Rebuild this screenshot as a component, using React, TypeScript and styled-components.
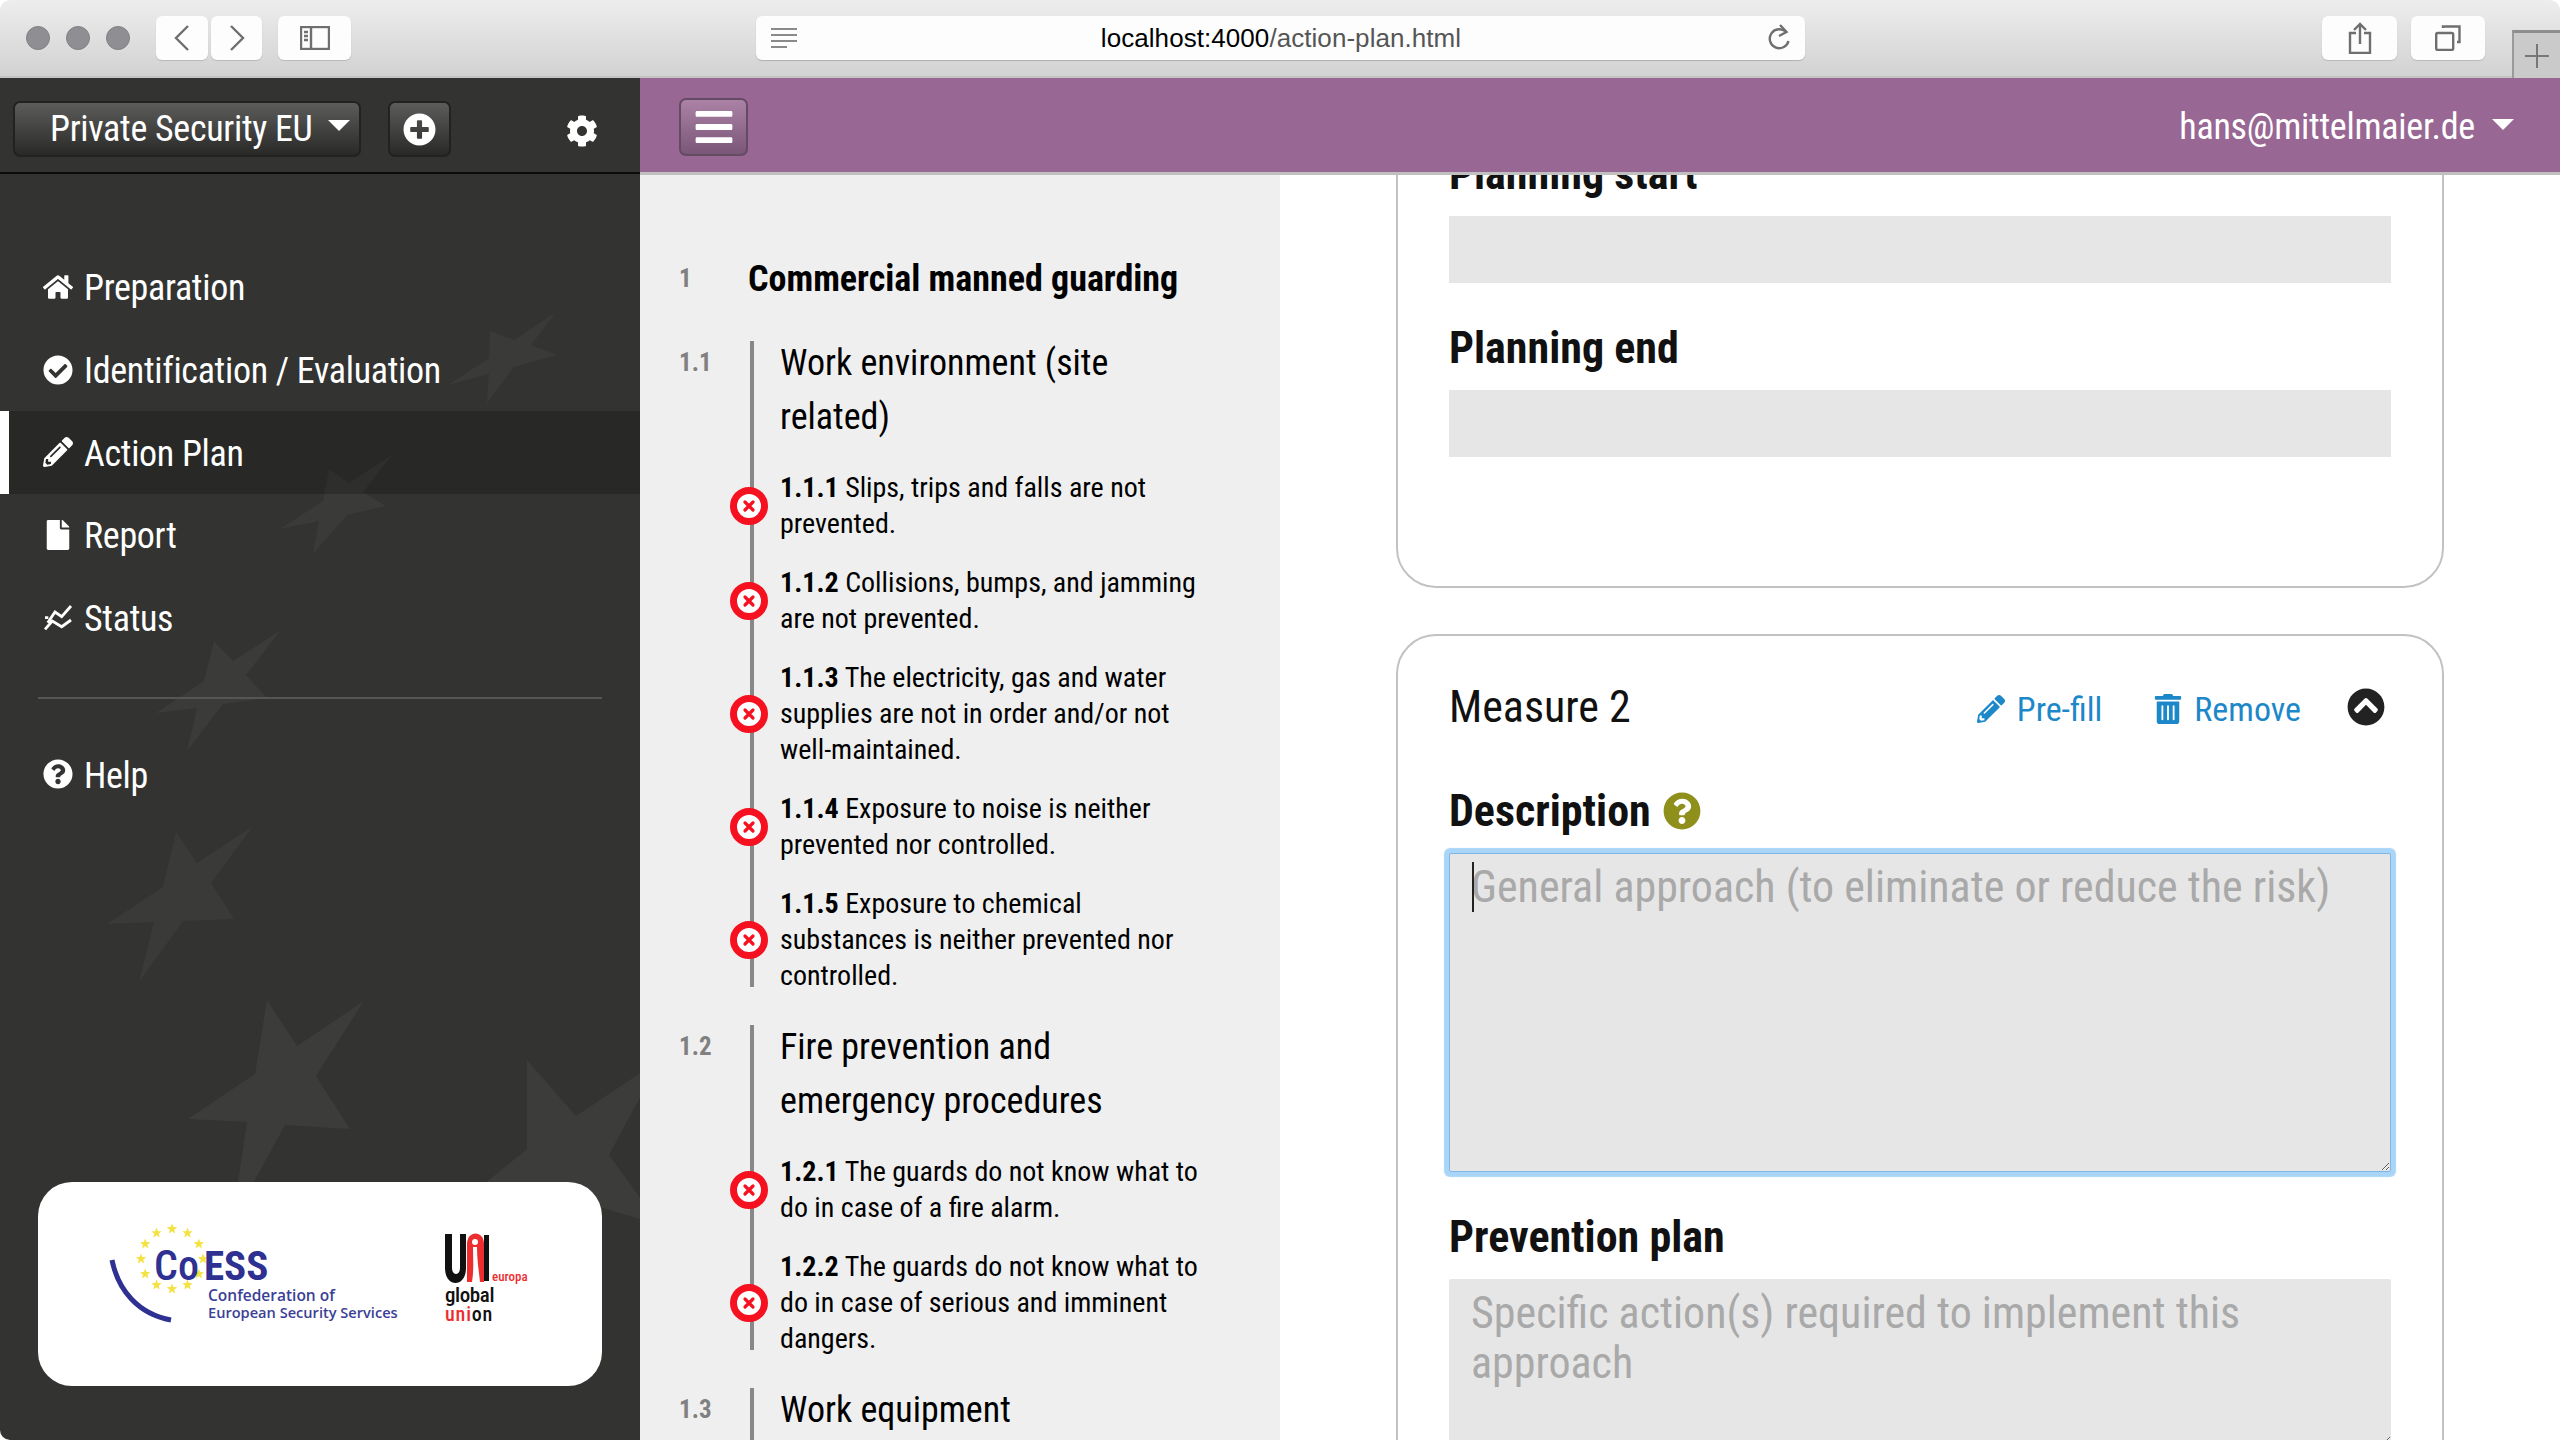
import React from "react";
import styled, { createGlobalStyle } from "styled-components";
import {
  FaHome,
  FaCheckCircle,
  FaPencilAlt,
  FaFile,
  FaQuestionCircle,
  FaCog,
  FaPlusCircle,
  FaTrashAlt,
  FaChevronCircleUp,
  FaBars,
} from "react-icons/fa";

const cond = `"Roboto Condensed", Roboto, sans-serif`;

const Global = createGlobalStyle`
  * { box-sizing: border-box; }
  html, body { margin: 0; padding: 0; background: #fff; overflow: hidden; }
  body { font-family: ${cond}; color: #111; }
`;

const Window = styled.div`
  width: 2560px;
  height: 1440px;
  display: flex;
  flex-direction: column;
  overflow: hidden;
  border-radius: 10px;
  background: #fff;
`;

const TitleBar = styled.header`
  height: 78px;
  flex: none;
  display: flex;
  align-items: center;
  padding-left: 26px;
  background: linear-gradient(#ededed, #d3d2d3);
  border-bottom: 2px solid #c4c3c4;
`;

const Light = styled.span`
  width: 24px;
  height: 24px;
  margin-right: 16px;
  border-radius: 50%;
  background: #8f8f93;
  border: 1px solid #808083;
`;

const ChromeButton = styled.div<{ $w: number; $ml: number }>`
  width: ${(p) => p.$w}px;
  margin-left: ${(p) => p.$ml}px;
  height: 44px;
  display: flex;
  align-items: center;
  justify-content: center;
  background: #fdfdfd;
  border-radius: 6px;
  box-shadow: 0 1px 1px #b9b9b9;
`;

const UrlBar = styled.div`
  width: 1049px;
  margin-left: 405px;
  height: 44px;
  display: flex;
  align-items: center;
  justify-content: space-between;
  padding: 0 14px 0 15px;
  background: #fdfdfd;
  border-radius: 6px;
  box-shadow: 0 1px 1px #b0b0b0;
`;

const UrlText = styled.div`
  font-family: "Liberation Sans", Arial, sans-serif;
  font-size: 26px;
  letter-spacing: 0.06px;
  color: #000;
  margin-left: -2px;
  span { color: #555; }
`;

const NewTab = styled.div`
  width: 48px;
  height: 48px;
  margin-left: 27px;
  align-self: flex-end;
  margin-bottom: -2px;
  display: flex;
  align-items: center;
  justify-content: center;
  background: #cbcacb;
  border-top: 3px solid #8e8e8e;
  border-left: 2px solid #9a9a9a;
`;

const Body = styled.div`
  flex: 1;
  display: flex;
  min-height: 0;
`;

const Sidebar = styled.aside`
  position: relative;
  width: 640px;
  flex: none;
  display: flex;
  flex-direction: column;
  background: #333331;
  overflow: hidden;
`;

const Stars = styled.svg`
  position: absolute;
  left: 0;
  top: 0;
  width: 640px;
  height: 1362px;
`;

const SideHead = styled.div`
  position: relative;
  height: 96px;
  flex: none;
  display: flex;
  align-items: flex-start;
  padding: 23px 0 0 13px;
  border-bottom: 2px solid #0b0b0b;
  color: #fff;
`;

const DarkButton = styled.div<{ $w: number; $ml?: number }>`
  width: ${(p) => p.$w}px;
  margin-left: ${(p) => p.$ml ?? 0}px;
  height: 56px;
  display: flex;
  align-items: center;
  color: #fff;
  background: linear-gradient(#5c5c5a, #292928);
  border: 2px solid #222;
  border-radius: 7px;
`;

const SiteName = styled.span`
  margin-left: 35px;
  font-size: 36px;
  letter-spacing: -0.3px;
  line-height: 1;
`;

const Caret = styled.span<{ $size: number }>`
  width: 0;
  height: 0;
  border-left: ${(p) => p.$size}px solid transparent;
  border-right: ${(p) => p.$size}px solid transparent;
  border-top: ${(p) => p.$size}px solid #fff;
`;

const SiteCaret = styled(Caret)`
  margin-left: 16px;
  margin-top: -8px;
`;

const CenterIcon = styled.span`
  flex: 1;
  display: flex;
  justify-content: center;
  font-size: 33px;
`;

const Gear = styled.span`
  margin-left: 115px;
  margin-top: 14px;
  font-size: 32px;
  line-height: 1;
`;

const Nav = styled.nav<{ $pt: number }>`
  position: relative;
  padding-top: ${(p) => p.$pt}px;
`;

const NavItem = styled.div<{ $active?: boolean }>`
  height: 82.7px;
  display: flex;
  align-items: center;
  padding-top: 2px;
  padding-left: ${(p) => (p.$active ? 34 : 43)}px;
  border-left: ${(p) => (p.$active ? "9px solid #fff" : "0")};
  background: ${(p) => (p.$active ? "rgba(0,0,0,.2)" : "transparent")};
  color: #fff;
  font-size: 36px;
  letter-spacing: -0.3px;
  svg {
    width: 30px;
    height: 30px;
    flex: none;
    margin-right: 11px;
    margin-top: -3px;
  }
`;

const Divider = styled.div`
  position: relative;
  height: 2px;
  margin: 38px 38px 0;
  background: #565654;
`;

const LogoCard = styled.div`
  position: relative;
  margin: auto 38px 54px;
  height: 204px;
  background: #fff;
  border-radius: 34px;
  svg { display: block; }
`;

const Main = styled.main`
  flex: 1;
  min-width: 0;
  display: flex;
  flex-direction: column;
`;

const TopBar = styled.div`
  height: 97px;
  flex: none;
  display: flex;
  align-items: flex-start;
  background: #986794;
  border-bottom: 3px solid #c0c0c0;
  color: #fff;
  position: relative;
  z-index: 1;
`;

const MenuButton = styled.div`
  width: 69px;
  height: 58px;
  margin: 20px 0 0 39px;
  display: flex;
  align-items: center;
  justify-content: center;
  color: #fff;
  font-size: 42px;
  background: linear-gradient(#ab82a6, #7a5678);
  border: 2px solid #654a64;
  border-radius: 7px;
`;

const User = styled.div`
  margin: 27px 0 0 auto;
  font-size: 36px;
  letter-spacing: -0.25px;
  line-height: 44px;
`;

const UserCaret = styled(Caret)`
  margin: 41px 46px 0 17px;
`;

const Columns = styled.div`
  flex: 1;
  min-height: 0;
  display: flex;
`;

const Outline = styled.section`
  width: 640px;
  flex: none;
  background: #efefef;
  padding: 77px 0 0 39px;
  overflow: hidden;
`;

const Chapter = styled.div`
  display: flex;
  align-items: center;
  height: 54px;
  margin-bottom: 35px;
`;

const Num = styled.div`
  font-size: 25px;
  font-weight: 700;
  color: #808080;
  line-height: 54px;
`;

const ChapterNum = styled(Num)`
  width: 69px;
`;

const ChapterTitle = styled.h1`
  margin: 0;
  font-size: 36px;
  font-weight: 700;
  color: #000;
  white-space: nowrap;
`;

const Group = styled.div`
  display: flex;
  margin-bottom: 38px;
`;

const GroupNum = styled(Num)`
  width: 71px;
  flex: none;
  margin-top: -5px;
`;

const GroupBody = styled.div`
  width: 451px;
  flex: none;
  padding-left: 26px;
  border-left: 4px solid #888;
`;

const GroupTitle = styled.h2`
  margin: -5px 0 26px;
  font-size: 36px;
  font-weight: 400;
  line-height: 54px;
  color: #000;
`;

const Item = styled.div`
  position: relative;
  margin-bottom: 23px;
  font-size: 28px;
  line-height: 36px;
  color: #000;
  &:last-child { margin-bottom: -7px; }
  b { font-weight: 700; }
`;

const Mark = styled.svg`
  position: absolute;
  left: -50px;
  top: 50%;
  width: 38px;
  height: 38px;
  margin-top: -19px;
`;

const FormColumn = styled.section`
  flex: 1;
  min-width: 0;
  overflow: hidden;
  padding-left: 116px;
`;

const Card = styled.div<{ $first?: boolean }>`
  width: 1048px;
  margin-top: ${(p) => (p.$first ? "-80px" : "46px")};
  padding: ${(p) => (p.$first ? "50px 51px 129px" : "44px 51px 0")};
  border: 2px solid #c2c2c2;
  border-radius: 40px;
  background: #fff;
`;

const FieldLabel = styled.label`
  display: flex;
  align-items: center;
  height: 54px;
  margin: 0 0 15px;
  font-size: 44px;
  font-weight: 700;
  color: #111;
`;

const PlainInput = styled.div`
  height: 67px;
  margin-bottom: 38px;
  background: #e6e6e6;
  &:last-child { margin-bottom: 0; }
`;

const HelpDot = styled(FaQuestionCircle)`
  margin-left: 12px;
  width: 38px;
  height: 38px;
  color: #8f8f1b;
`;

const MeasureHead = styled.div`
  display: flex;
  align-items: center;
  height: 54px;
  margin-bottom: 50px;
`;

const MeasureTitle = styled.h3`
  margin: 0 auto 0 0;
  font-size: 44px;
  font-weight: 400;
  color: #111;
`;

const Action = styled.a`
  display: flex;
  align-items: center;
  margin: 4px 52px 0 0;
  font-size: 34px;
  color: #1c87c9;
  svg {
    width: 28px;
    height: 30px;
    margin-right: 12px;
  }
`;

const Collapse = styled(FaChevronCircleUp)`
  width: 38px;
  height: 38px;
  margin-right: 6px;
  margin-left: -6px;
  color: #222;
`;

const AreaWrap = styled.div`
  position: relative;
  margin-bottom: 38px;
`;

const Area = styled.textarea<{ $h: number; $focus?: boolean }>`
  display: block;
  width: 942px;
  height: ${(p) => p.$h}px;
  padding: ${(p) => (p.$focus ? "8px 21px" : "9px 22px")};
  border: ${(p) => (p.$focus ? "1px solid #7fb6e6" : "0")};
  border-radius: 2px;
  outline: 0;
  resize: vertical;
  background: #e6e6e6;
  font-family: ${cond};
  font-size: 44px;
  line-height: 50px;
  box-shadow: ${(p) => (p.$focus ? "0 0 1px 5px #a9d5f8" : "none")};
  &::placeholder { color: #a9a9a9; opacity: 1; }
`;

const TextCaret = styled.span`
  position: absolute;
  left: 23px;
  top: 9px;
  width: 2px;
  height: 50px;
  background: #222;
`;

const iconStroke = { fill: "none", stroke: "#6f6f6f", strokeWidth: 2.4 };

const starPoints = [
  ["556,312 531,345 557,355 514,367 487,403 489,374 448,385 489,358 490,331 514,340", "#3a3a39"],
  ["392,455 363,492 386,506 347,515 313,554 319,521 280,529 323,501 329,469 349,483", "#3a3a39"],
  ["281,630 246,675 267,698 223,704 187,751 197,708 156,713 204,681 214,641 233,661", "#3b3b3a"],
  ["253,826 211,883 234,919 183,921 139,982 154,922 107,924 163,887 176,832 197,863", "#3a3a39"],
  ["364,1001 316,1076 350,1129 285,1125 232,1222 247,1122 188,1119 255,1074 267,1000 297,1046", "#3c3c3b"],
  ["660,1060 609,1155 660,1225 576,1200 527,1300 527,1230 440,1220 527,1149 527,1060 576,1116", "#3c3c3b"],
];

const ringStars = Array.from({ length: 12 }, (_, i) => {
  const a = (i * Math.PI) / 6;
  return { x: 172 + Math.sin(a) * 31, y: 1259 - Math.cos(a) * 30 };
});

const starPath = (x: number, y: number, r: number) => {
  const pts: string[] = [];
  for (let i = 0; i < 10; i++) {
    const a = (i * Math.PI) / 5;
    const rr = i % 2 ? r * 0.42 : r;
    pts.push(`${(x + Math.sin(a) * rr).toFixed(1)},${(y - Math.cos(a) * rr).toFixed(1)}`);
  }
  return pts.join(" ");
};

const XMark = () => (
  <Mark viewBox="0 0 38 38">
    <circle cx="19" cy="19" r="15.5" fill="#fff" stroke="#f5111f" strokeWidth="7" />
    <path d="M15 15l8 8M23 15l-8 8" stroke="#f5111f" strokeWidth="3.2" strokeLinecap="round" />
  </Mark>
);

const StatusIcon = () => (
  <svg viewBox="0 0 30 30">
    <path
      d="M4.7 19.7 L12 9 L18.7 13.7 L28 3 M2 14.7 H5.3 M2 26.3 L9.3 18 L18.7 23.7 L28 17"
      fill="none"
      stroke="#fff"
      strokeWidth="2.8"
    />
  </svg>
);

const groups = [
  {
    num: "1.1",
    title: "Work environment (site related)",
    items: [
      ["1.1.1", "Slips, trips and falls are not prevented."],
      ["1.1.2", "Collisions, bumps, and jamming are not prevented."],
      ["1.1.3", "The electricity, gas and water supplies are not in order and/or not well-maintained."],
      ["1.1.4", "Exposure to noise is neither prevented nor controlled."],
      ["1.1.5", "Exposure to chemical substances is neither prevented nor controlled."],
    ],
  },
  {
    num: "1.2",
    title: "Fire prevention and emergency procedures",
    items: [
      ["1.2.1", "The guards do not know what to do in case of a fire alarm."],
      ["1.2.2", "The guards do not know what to do in case of serious and imminent dangers."],
    ],
  },
  { num: "1.3", title: "Work equipment", items: [] as string[][] },
];

export default function App() {
  return (
    <Window>
      <Global />
      <TitleBar>
        <Light />
        <Light />
        <Light />
        <ChromeButton $w={52} $ml={10}>
          <svg width="16" height="26" viewBox="0 0 16 26"><path d="M14 1 L2 13 L14 25" {...iconStroke} /></svg>
        </ChromeButton>
        <ChromeButton $w={51} $ml={3}>
          <svg width="16" height="26" viewBox="0 0 16 26"><path d="M2 1 L14 13 L2 25" {...iconStroke} /></svg>
        </ChromeButton>
        <ChromeButton $w={73} $ml={16}>
          <svg width="30" height="24" viewBox="0 0 30 24">
            <rect x="1" y="1" width="28" height="22" {...iconStroke} />
            <path d="M11 1 V23" {...iconStroke} />
            <path d="M4 6 H8 M4 10 H8 M4 14 H8" {...iconStroke} />
          </svg>
        </ChromeButton>
        <UrlBar>
          <svg width="26" height="22" viewBox="0 0 26 22">
            <path d="M0 2 H26 M0 8 H26 M0 14 H26 M0 20 H16" fill="none" stroke="#8a8a8a" strokeWidth="2" />
          </svg>
          <UrlText>localhost:4000<span>/action-plan.html</span></UrlText>
          <svg width="24" height="28" viewBox="0 0 24 28">
            <path d="M19 8 A9.5 9.5 0 1 0 21.5 17" {...iconStroke} />
            <path d="M13 1 L19.5 8 L12 12" {...iconStroke} />
          </svg>
        </UrlBar>
        <ChromeButton $w={75} $ml={517}>
          <svg width="24" height="32" viewBox="0 0 24 32">
            <path d="M8 11 H2 V31 H22 V11 H16 M12 22 V2 M6 8 L12 2 L18 8" {...iconStroke} />
          </svg>
        </ChromeButton>
        <ChromeButton $w={74} $ml={14}>
          <svg width="26" height="26" viewBox="0 0 26 26">
            <rect x="1.2" y="8" width="17" height="17" rx="1.5" {...iconStroke} />
            <path d="M8 3 V1.5 H24.5 V17 H22" {...iconStroke} />
          </svg>
        </ChromeButton>
        <NewTab>
          <svg width="24" height="24" viewBox="0 0 24 24"><path d="M0 12 H24 M12 0 V24" fill="none" stroke="#777" strokeWidth="2" /></svg>
        </NewTab>
      </TitleBar>

      <Body>
        <Sidebar>
          <Stars viewBox="0 78 640 1362">
            {starPoints.map(([pts, fill]) => (
              <polygon key={pts} points={pts} fill={fill} />
            ))}
          </Stars>
          <SideHead>
            <DarkButton $w={348}>
              <SiteName>Private Security EU</SiteName>
              <SiteCaret $size={11} />
            </DarkButton>
            <DarkButton $w={63} $ml={27}>
              <CenterIcon><FaPlusCircle /></CenterIcon>
            </DarkButton>
            <Gear><FaCog /></Gear>
          </SideHead>

          <Nav $pt={72}>
            <NavItem><FaHome />Preparation</NavItem>
            <NavItem><FaCheckCircle />Identification / Evaluation</NavItem>
            <NavItem $active><FaPencilAlt />Action Plan</NavItem>
            <NavItem><FaFile />Report</NavItem>
            <NavItem><StatusIcon />Status</NavItem>
          </Nav>
          <Divider />
          <Nav $pt={34}>
            <NavItem><FaQuestionCircle />Help</NavItem>
          </Nav>

          <LogoCard>
            <svg width="564" height="204" viewBox="38 1182 564 204">
              <path d="M112 1260 C118 1290 138 1314 171 1320" fill="none" stroke="#2e3192" strokeWidth="5" />
              {ringStars.map((s) => (
                <polygon key={`${s.x}-${s.y}`} points={starPath(s.x, s.y, 5.5)} fill="#f4e242" />
              ))}
              <text x="154" y="1280" fontFamily="Roboto Condensed" fontSize="42" fontWeight="500" fill="#2e3192">Co</text>
              <text x="204" y="1280" fontFamily="Roboto Condensed" fontSize="41" fontWeight="700" fill="#2e3192">ESS</text>
              <text x="208" y="1301" fontFamily="Open Sans" fontSize="15.5" fontWeight="600" fill="#3b3f95">Confederation of</text>
              <text x="208" y="1318" fontFamily="Open Sans" fontSize="14.6" fontWeight="600" fill="#3b3f95">European Security Services</text>
              <path d="M445 1234 H452 V1268 C452 1276 460 1276 460 1268 V1234 H466 V1268 C466 1288 445 1288 445 1268 Z" fill="#111" />
              <path d="M467 1282 V1244 C467 1230 484 1230 484 1244 V1282 Z" fill="#ee2d2f" />
              <circle cx="475" cy="1242" r="3" fill="#fff" />
              <path d="M473 1247 H477 C477 1260 479 1272 480 1282 H472 C474 1270 473 1258 473 1247 Z" fill="#fff" />
              <rect x="484" y="1235" width="5" height="46" fill="#111" />
              <text x="492" y="1281" fontFamily="Roboto Condensed" fontSize="13" fontWeight="500" fill="#ee2d2f">europa</text>
              <text x="445" y="1302" fontFamily="Roboto Condensed" fontSize="21" fontWeight="500" fill="#111" letterSpacing="-0.4">global</text>
              <text x="445" y="1321" fontFamily="Roboto Condensed" fontSize="20" fontWeight="500" fill="#ee2d2f" letterSpacing="0.8">uni<tspan fill="#111">on</tspan></text>
            </svg>
          </LogoCard>
        </Sidebar>

        <Main>
          <TopBar>
            <MenuButton><FaBars /></MenuButton>
            <User>hans@mittelmaier.de</User>
            <UserCaret $size={11} />
          </TopBar>
          <Columns>
            <Outline>
              <Chapter>
                <ChapterNum>1</ChapterNum>
                <ChapterTitle>Commercial manned guarding</ChapterTitle>
              </Chapter>
              {groups.map((g) => (
                <Group key={g.num}>
                  <GroupNum>{g.num}</GroupNum>
                  <GroupBody>
                    <GroupTitle>{g.title}</GroupTitle>
                    {g.items.map(([n, t]) => (
                      <Item key={n}>
                        <XMark />
                        <b>{n}</b> {t}
                      </Item>
                    ))}
                  </GroupBody>
                </Group>
              ))}
            </Outline>

            <FormColumn>
              <Card $first>
                <FieldLabel>Planning start</FieldLabel>
                <PlainInput />
                <FieldLabel>Planning end</FieldLabel>
                <PlainInput />
              </Card>
              <Card>
                <MeasureHead>
                  <MeasureTitle>Measure 2</MeasureTitle>
                  <Action><FaPencilAlt />Pre-fill</Action>
                  <Action><FaTrashAlt />Remove</Action>
                  <Collapse />
                </MeasureHead>
                <FieldLabel>Description<HelpDot /></FieldLabel>
                <AreaWrap>
                  <Area $h={319} $focus placeholder="General approach (to eliminate or reduce the risk)" />
                  <TextCaret />
                </AreaWrap>
                <FieldLabel>Prevention plan</FieldLabel>
                <AreaWrap>
                  <Area $h={166} placeholder="Specific action(s) required to implement this approach" />
                </AreaWrap>
              </Card>
            </FormColumn>
          </Columns>
        </Main>
      </Body>
    </Window>
  );
}
